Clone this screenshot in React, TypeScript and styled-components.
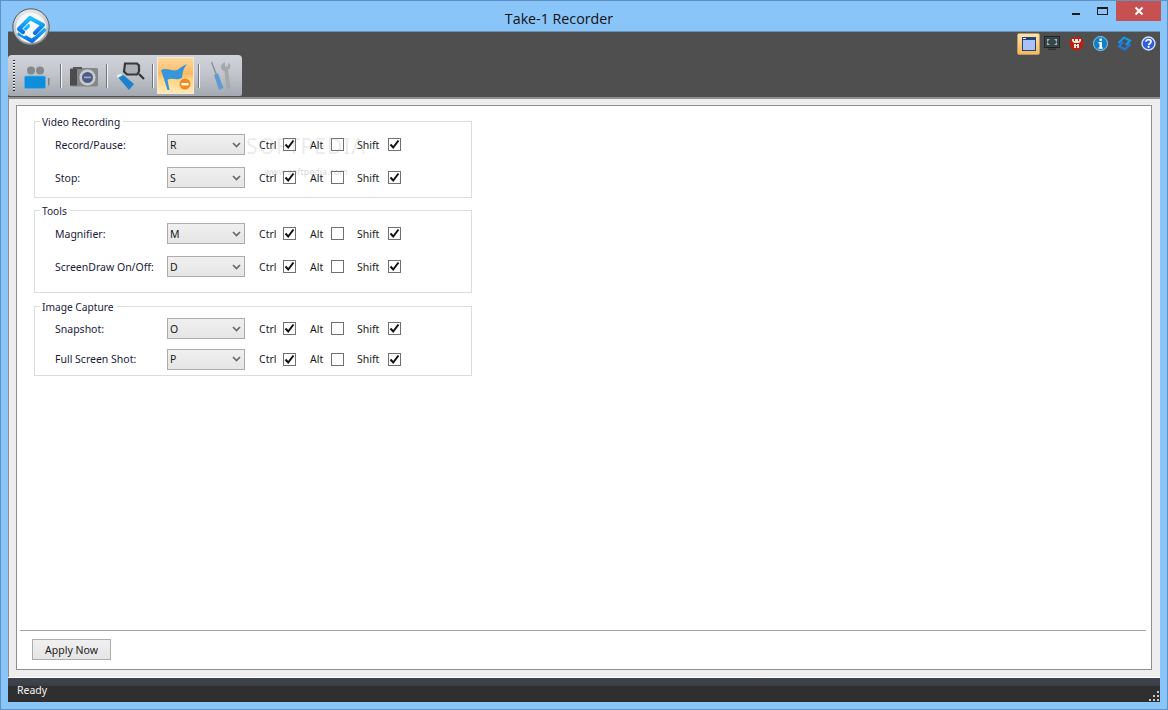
import React from 'react';
import styled, { createGlobalStyle } from 'styled-components';

const GlobalStyle = createGlobalStyle`
  html, body {
    margin: 0;
    padding: 0;
    height: 710px;
    overflow: hidden;
    background: #8ac5fa;
  }
  * {
    box-sizing: border-box;
  }
`;

const Frame = styled.div`
  width: 1168px;
  height: 710px;
  display: flex;
  flex-direction: column;
  padding: 0 7px 7px;
  background: #8ac5fa;
  border: 1px solid #5e92c2;
  font-family: 'Noto Sans', 'Liberation Sans', sans-serif;
  font-size: 10.5px;
  color: #1a1a1a;
  position: relative;
`;

const TitleBar = styled.div`
  height: 30px;
  flex: none;
  display: flex;
  align-items: flex-start;
  justify-content: center;
  padding-right: 50px;
  position: relative;
`;

const Title = styled.div`
  font-family: 'Open Sans', sans-serif;
  font-size: 14.25px;
  line-height: 20px;
  margin-top: 8px;
  color: #111;
`;

const Logo = styled.svg`
  position: absolute;
  left: 11px;
  top: 7px;
  z-index: 2;
`;

const WindowButtons = styled.div`
  position: absolute;
  right: -1px;
  top: 0;
  display: flex;
  align-items: flex-start;
`;

const CaptionButton = styled.div<{ $close?: boolean }>`
  width: ${(p) => (p.$close ? 45 : 27)}px;
  height: 20px;
  display: flex;
  align-items: center;
  justify-content: center;
  background: ${(p) => (p.$close ? '#c75050' : 'transparent')};
`;

const Body = styled.div`
  flex: 1;
  display: flex;
  flex-direction: column;
  min-height: 0;
  background: #4f4f4f;
  border-top: 1px solid #6d8fb0;
`;

const TopStrip = styled.div`
  height: 65px;
  flex: none;
  display: flex;
  flex-direction: column;
`;

const IconRow = styled.div`
  height: 23px;
  flex: none;
  display: flex;
  justify-content: flex-end;
  align-items: center;
`;

const SmallIcon = styled.div<{ $active?: boolean }>`
  width: ${(p) => (p.$active ? 23 : 24)}px;
  height: 22px;
  display: flex;
  align-items: center;
  justify-content: center;
  border: 1px solid ${(p) => (p.$active ? '#b79a68' : 'transparent')};
  background: ${(p) =>
    p.$active ? 'linear-gradient(#fde3a8, #f9b75a)' : 'transparent'};
  border-radius: 2px;
`;

const Toolbar = styled.div`
  width: 234px;
  height: 41px;
  flex: none;
  display: flex;
  align-items: flex-start;
  padding: 2px 0 0 5px;
  background: linear-gradient(#d0d4da, #c2c6cc 45%, #a4a8b0);
  border-radius: 4px 4px 2px 2px;
`;

const Grip = styled.div`
  width: 2px;
  height: 31px;
  margin: 3px 4px 0 0;
  background: repeating-linear-gradient(#2b2b2b 0 1px, #f2f2f2 1px 2px, transparent 2px 3px);
`;

const ToolButton = styled.div<{ $active?: boolean }>`
  width: 37px;
  height: 37px;
  display: flex;
  align-items: center;
  justify-content: center;
  background: ${(p) =>
    p.$active ? 'linear-gradient(#fdd9a0, #fbb963 45%, #fed483 60%, #ffe9b8)' : 'transparent'};
  outline: ${(p) => (p.$active ? '1px solid #f3ead8' : 'none')};
  outline-offset: -1px;
`;

const ToolSeparator = styled.div`
  width: 2px;
  height: 24px;
  margin: 7px 3px 0 4px;
  background: linear-gradient(90deg, #70747a 50%, #f4f5f6 50%);
`;

const Workspace = styled.div`
  flex: 1;
  min-height: 0;
  display: flex;
  background: #eeeeee;
  border-top: 2px solid #8f8f8f;
  border-left: 1px solid #8f8f8f;
  padding: 6px 8px 7px 7px;
`;

const Panel = styled.div`
  flex: 1;
  display: flex;
  flex-direction: column;
  background: #fff;
  border: 1px solid #8f8f8f;
  position: relative;
`;

const Settings = styled.div`
  flex: 1;
  width: 456px;
  padding: 8px 0 0 17px;
  display: flex;
  flex-direction: column;
  position: relative;
`;

const Group = styled.fieldset<{ $height: number; $gap: number }>`
  margin: 0 0 ${(p) => p.$gap}px;
  padding: 0 0 0 20px;
  width: 438px;
  height: ${(p) => p.$height}px;
  border: 1px solid #dcdcdc;
  min-width: 0;
`;

const GroupTitle = styled.legend`
  margin-left: -15px;
  padding: 1px 3px 0 2px;
  height: 14px;
  line-height: 14px;
  font-size: 10.2px;
  color: #1a1a3a;
`;

const Row = styled.div<{ $height: number }>`
  height: ${(p) => p.$height}px;
  display: flex;
  align-items: center;
`;

const RowLabel = styled.div`
  width: 112px;
  flex: none;
  color: #1a1a3a;
`;

const KeySelect = styled.div`
  width: 78px;
  height: 21px;
  flex: none;
  display: flex;
  align-items: center;
  justify-content: space-between;
  padding: 0 3px 0 2px;
  border: 1px solid #acacac;
  background: linear-gradient(#f0f0f0, #e5e5e5);
  margin-right: 14px;
`;

const Mod = styled.label<{ $width: number; $gap: number }>`
  width: ${(p) => p.$width}px;
  flex: none;
  display: flex;
  align-items: center;
  justify-content: space-between;
  margin-right: ${(p) => p.$gap}px;
`;

const CheckBox = styled.span`
  width: 13px;
  height: 13px;
  display: flex;
  align-items: center;
  justify-content: center;
  border: 1px solid #707070;
  background: #fff;
`;

const Watermark = styled.div`
  position: absolute;
  left: 224px;
  top: 28px;
  width: 130px;
  text-align: center;
  color: rgba(150, 150, 150, 0.2);
  font-size: 21px;
  line-height: 24px;
  letter-spacing: 1px;
  pointer-events: none;
`;

const WatermarkUrl = styled.div`
  font-size: 9px;
  line-height: 12px;
  margin-top: 8px;
  letter-spacing: 0;
  color: rgba(120, 120, 120, 0.3);
`;

const Footer = styled.div`
  height: 39px;
  margin: 0 5px 0 3px;
  border-top: 1px solid #a0a0a0;
  padding: 8px 0 0 12px;
  flex: none;
`;

const ApplyButton = styled.button`
  width: 79px;
  height: 21px;
  padding: 0;
  border: 1px solid #acacac;
  background: linear-gradient(#f0f0f0, #e5e5e5);
  font: inherit;
  color: #1a1a1a;
`;

const StatusBar = styled.div`
  height: 25px;
  flex: none;
  display: flex;
  align-items: center;
  padding: 0 0 0 9px;
  color: #f4f4f4;
  background: linear-gradient(#41454f 0, #3a3d47 34%, #2f2f2f 34%, #2e2e2e);
  border-top: 1px solid #fff;
  position: relative;
`;

const Grabber = styled.svg`
  position: absolute;
  right: 0;
  bottom: 0;
`;

const Check = () => (
  <svg width="11" height="11" viewBox="0 0 11 11">
    <path d="M1.5 5.5 L4.2 8.5 L9.5 1.5" fill="none" stroke="#111" strokeWidth="2" />
  </svg>
);

const Chevron = () => (
  <svg width="9" height="6" viewBox="0 0 9 6">
    <path d="M1 1 L4.5 4.5 L8 1" fill="none" stroke="#666" strokeWidth="1.6" />
  </svg>
);

const AppLogo = () => (
  <Logo width="38" height="38" viewBox="0 0 38 38">
    <defs>
      <radialGradient id="ball" cx="0.45" cy="0.25" r="0.85">
        <stop offset="0" stopColor="#f4f4f4" />
        <stop offset="0.65" stopColor="#c4c8cc" />
        <stop offset="1" stopColor="#70757a" />
      </radialGradient>
      <linearGradient id="knot" x1="0" y1="0" x2="0" y2="1">
        <stop offset="0" stopColor="#1cc0ff" />
        <stop offset="1" stopColor="#0f6fe6" />
      </linearGradient>
    </defs>
    <circle cx="19" cy="19" r="18.2" fill="url(#ball)" stroke="#55595d" />
    <circle cx="19" cy="20" r="15" fill="#f4f8fb" />
    <g fill="none" strokeLinejoin="round" strokeLinecap="round">
      <path d="M32 22 L20 33 L7.5 26 L16 18" stroke="url(#knot)" strokeWidth="4.2" />
      <path d="M21 26 L31 17 L18 10 L7 21 L12 25" stroke="#f4f8fb" strokeWidth="6" />
      <path d="M23 25 L31 17 L18 10 L7 21 L11 24" stroke="url(#knot)" strokeWidth="4.2" />
    </g>
  </Logo>
);

const VideoIcon = () => (
  <svg width="28" height="26" viewBox="0 0 28 26">
    <circle cx="7" cy="7.5" r="4" fill="#85888d" />
    <circle cx="16" cy="7.5" r="4" fill="#85888d" />
    <rect x="0.5" y="13" width="21" height="12.5" rx="1.5" fill="#0f8edb" stroke="#52b0e8" strokeWidth="0.8" />
    <path d="M22 15 h5.5 v7.5 h-5.5z" fill="#b9bcc0" />
    <path d="M24 15 h1.5 v7.5 h-1.5z" fill="#7c7f84" />
  </svg>
);

const CameraIcon = () => (
  <svg width="30" height="24" viewBox="0 0 30 24">
    <rect x="1" y="4" width="28" height="18.5" rx="1.5" fill="#85878b" />
    <rect x="4" y="3" width="9" height="2" fill="#55575b" />
    <rect x="1" y="5" width="7" height="16.5" fill="#4c4c4e" />
    <circle cx="18.5" cy="13.5" r="8.5" fill="#c9cbcf" stroke="#77797d" strokeWidth="0.6" />
    <circle cx="18.5" cy="13.5" r="5.5" fill="#4b5c88" />
    <rect x="15" y="12.6" width="7" height="1.6" fill="#a8aec0" />
  </svg>
);

const MagnifierIcon = () => (
  <svg width="30" height="30" viewBox="0 0 30 30">
    <path d="M10 2.5 h12 l2 2 v6 l-2 3 h-10 l-3 -3z" fill="#aeb1b6" stroke="#38383a" strokeWidth="2.2" />
    <path d="M24 13 l5 5" stroke="#333" strokeWidth="2.2" />
    <path d="M1 14 l5 -2 l13 11 l-5 6z" fill="#1d82cc" />
    <path d="M1 14 l5 -2 l2 2 l-5 3z" fill="#e8e8e8" />
  </svg>
);

const FlagIcon = () => (
  <svg width="30" height="30" viewBox="0 0 30 30">
    <path d="M0 9 C6 6 11 11 16 9 C20 7 22 4 26 3.5 C23 6 21.5 11 21 17 C15 20 11 16 6.5 19 L8.5 29 L6.5 29 L3 18z" fill="#3596dc" />
    <circle cx="24" cy="23" r="5.5" fill="#f08a1c" />
    <rect x="20.5" y="22" width="7" height="2.4" fill="#fff" />
  </svg>
);

const ToolsIcon = () => (
  <svg width="22" height="30" viewBox="0 0 22 30">
    <path d="M0.5 1 L5.5 14" stroke="#8c9096" strokeWidth="1.4" />
    <path d="M3 14 L7 12.5 L12.5 27 L8 29z" fill="#5f9bd2" />
    <path d="M10 6 C10 3 12 2 14 1.5 L14 5.5 L17 5.5 L17 2 C20 3 20 7 17 9 L19.5 27 L15.5 28.5 L13.5 10 C11.5 10 10 8 10 6z" fill="#a6a8ac" />
  </svg>
);

const WindowIcon = () => (
  <svg width="14" height="14" viewBox="0 0 14 14">
    <rect x="0" y="0" width="14" height="14" fill="#24407e" />
    <rect x="1" y="3" width="12" height="10" fill="#a9c2f6" />
    <rect x="1" y="1" width="3" height="1" fill="#e8eefa" />
  </svg>
);

const FullscreenIcon = () => (
  <svg width="16" height="15" viewBox="0 0 16 15">
    <rect x="0.5" y="0.5" width="15" height="11" fill="#37464a" stroke="#222" />
    <path d="M3 3 h3 l-3 3z M13 3 h-3 l3 3z M3 9 h3 l-3 -3z M13 9 h-3 l3 -3z" fill="#aab4b4" />
    <rect x="4" y="12.5" width="8" height="1.5" fill="#333" />
  </svg>
);

const BugIcon = () => (
  <svg width="15" height="15" viewBox="0 0 15 15">
    <circle cx="7.5" cy="7.5" r="7" fill="#bf1f10" />
    <path d="M3 3 h2 v2 h1 v-2 h3 v2 h1 v-2 h2 v2 l-2 2 h-5 l-2 -2z M5 8 h2 v1 h1 v-1 h2 v4 h-2 v-2 h-1 v2 h-2z" fill="#f6e6e0" />
  </svg>
);

const InfoIcon = () => (
  <svg width="15" height="15" viewBox="0 0 15 15">
    <circle cx="7.5" cy="7.5" r="7" fill="#0f7fc6" stroke="#8ccbec" />
    <rect x="6.5" y="2.5" width="2.4" height="2.4" fill="#fff" />
    <path d="M5.5 6 h3.4 v5.5 h1 v1.2 h-4.4 v-1.2 h1 v-4.3 h-1z" fill="#fff" />
  </svg>
);

const BrandIcon = () => (
  <svg width="15" height="15" viewBox="0 0 15 15">
    <g fill="none" stroke="#0f9aee" strokeWidth="2.2">
      <path d="M1.5 7 L7 1.5 L13 4.5 L9 9" />
      <path d="M13.5 8 L8 13.5 L2 10.5 L6 6" stroke="#1a7be0" />
    </g>
  </svg>
);

const HelpIcon = () => (
  <svg width="15" height="15" viewBox="0 0 15 15">
    <circle cx="7.5" cy="7.5" r="6.5" fill="#2f5fd8" stroke="#d4e2fa" strokeWidth="1.4" />
    <path d="M5 5.8 C5 3 10 3 10 5.8 C10 7.6 7.6 7.4 7.6 9.2" fill="none" stroke="#fff" strokeWidth="1.7" />
    <rect x="6.7" y="10" width="1.8" height="1.8" fill="#fff" />
  </svg>
);

interface IShortcut {
  label: string;
  key: string;
  height: number;
}

const groups: { title: string; height: number; gap: number; rows: IShortcut[] }[] = [
  {
    title: 'Video Recording',
    height: 84,
    gap: 5,
    rows: [
      { label: 'Record/Pause:', key: 'R', height: 33 },
      { label: 'Stop:', key: 'S', height: 33 },
    ],
  },
  {
    title: 'Tools',
    height: 90,
    gap: 6,
    rows: [
      { label: 'Magnifier:', key: 'M', height: 33 },
      { label: 'ScreenDraw On/Off:', key: 'D', height: 33 },
    ],
  },
  {
    title: 'Image Capture',
    height: 77,
    gap: 0,
    rows: [
      { label: 'Snapshot:', key: 'O', height: 31 },
      { label: 'Full Screen Shot:', key: 'P', height: 30 },
    ],
  },
];

function App() {
  return (
    <>
      <GlobalStyle />
      <Frame>
        <AppLogo />
        <TitleBar>
          <Title>Take-1 Recorder</Title>
          <WindowButtons>
            <CaptionButton>
              <svg width="10" height="10" viewBox="0 0 10 10">
                <rect x="1" y="7" width="8" height="2" fill="#1a1a1a" />
              </svg>
            </CaptionButton>
            <CaptionButton>
              <svg width="11" height="10" viewBox="0 0 11 10">
                <rect x="0.5" y="1.5" width="10" height="7" fill="none" stroke="#1a1a1a" />
                <rect x="0" y="1" width="11" height="2" fill="#1a1a1a" />
              </svg>
            </CaptionButton>
            <CaptionButton $close>
              <svg width="10" height="10" viewBox="0 0 10 10">
                <path d="M1.5 1.5 L8.5 8.5 M8.5 1.5 L1.5 8.5" stroke="#fff" strokeWidth="2" />
              </svg>
            </CaptionButton>
          </WindowButtons>
        </TitleBar>
        <Body>
          <TopStrip>
            <IconRow>
              <SmallIcon $active><WindowIcon /></SmallIcon>
              <SmallIcon><FullscreenIcon /></SmallIcon>
              <SmallIcon><BugIcon /></SmallIcon>
              <SmallIcon><InfoIcon /></SmallIcon>
              <SmallIcon><BrandIcon /></SmallIcon>
              <SmallIcon><HelpIcon /></SmallIcon>
            </IconRow>
            <Toolbar>
              <Grip />
              <ToolButton><VideoIcon /></ToolButton>
              <ToolSeparator />
              <ToolButton><CameraIcon /></ToolButton>
              <ToolSeparator />
              <ToolButton><MagnifierIcon /></ToolButton>
              <ToolSeparator />
              <ToolButton $active><FlagIcon /></ToolButton>
              <ToolSeparator />
              <ToolButton><ToolsIcon /></ToolButton>
            </Toolbar>
          </TopStrip>
          <Workspace>
            <Panel>
              <Settings>
                {groups.map((g) => (
                  <Group key={g.title} $height={g.height} $gap={g.gap}>
                    <GroupTitle>{g.title}</GroupTitle>
                    {g.rows.map((r) => (
                      <Row key={r.label} $height={r.height}>
                        <RowLabel>{r.label}</RowLabel>
                        <KeySelect>
                          {r.key}
                          <Chevron />
                        </KeySelect>
                        <Mod $width={37} $gap={14}>
                          Ctrl
                          <CheckBox><Check /></CheckBox>
                        </Mod>
                        <Mod $width={34} $gap={13}>
                          Alt
                          <CheckBox />
                        </Mod>
                        <Mod $width={44} $gap={0}>
                          Shift
                          <CheckBox><Check /></CheckBox>
                        </Mod>
                      </Row>
                    ))}
                  </Group>
                ))}
                <Watermark>
                  SOFTPEDIA
                  <WatermarkUrl>www.softpedia.com</WatermarkUrl>
                </Watermark>
              </Settings>
              <Footer>
                <ApplyButton>Apply Now</ApplyButton>
              </Footer>
            </Panel>
          </Workspace>
          <StatusBar>
            Ready
            <Grabber width="12" height="12" viewBox="0 0 12 12">
              <path d="M9 1h2v2H9z M9 5h2v2H9z M5 5h2v2H5z M9 9h2v2H9z M5 9h2v2H5z M1 9h2v2H1z" fill="#c8c8c8" />
            </Grabber>
          </StatusBar>
        </Body>
      </Frame>
    </>
  );
}

export default App;
